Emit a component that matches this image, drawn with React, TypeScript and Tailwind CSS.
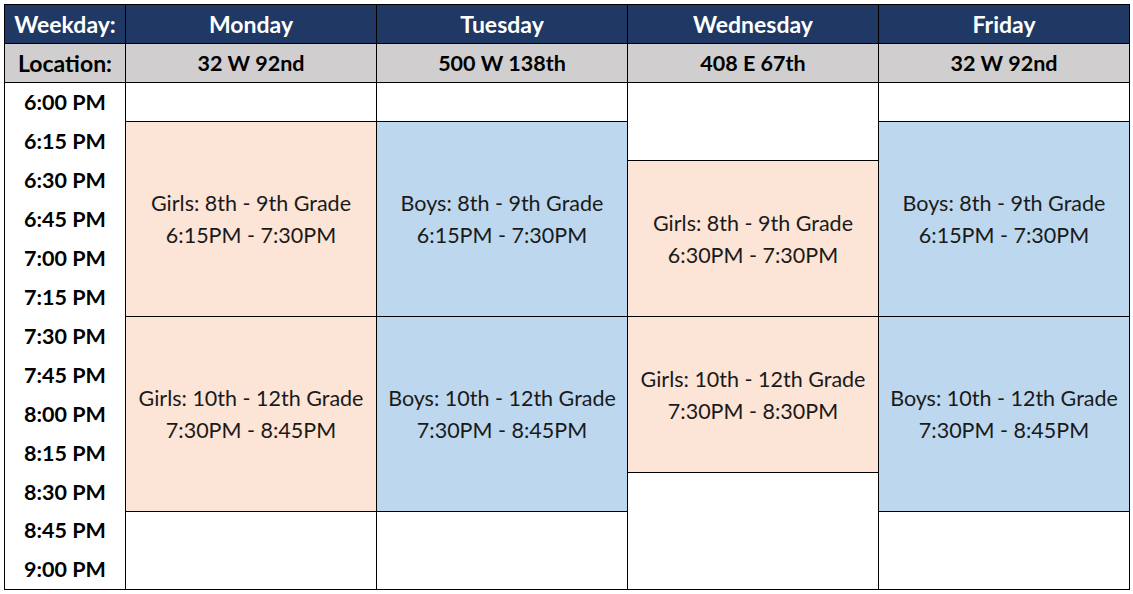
const times = [
  "6:00 PM",
  "6:15 PM",
  "6:30 PM",
  "6:45 PM",
  "7:00 PM",
  "7:15 PM",
  "7:30 PM",
  "7:45 PM",
  "8:00 PM",
  "8:15 PM",
  "8:30 PM",
  "8:45 PM",
  "9:00 PM",
];

const Block = ({
  className,
  lines,
}: {
  className: string;
  lines?: string[];
}) => (
  <div
    className={`flex flex-col items-center justify-center border-r border-b border-black text-[21.5px] leading-[32px] text-[#1a1a1a] ${className}`}
  >
    {lines?.map((line) => (
      <span key={line}>{line}</span>
    ))}
  </div>
);

const App = () => {
  return (
    <div
      className="min-h-[594px] w-[1133px] bg-white pt-[4px] pl-[4px]"
      style={{ fontFamily: "Lato, 'Open Sans', sans-serif" }}
    >
      <div className="grid w-[1126px] grid-cols-[121px_251px_251px_251px_251px] grid-rows-[repeat(15,39px)] border-l border-t border-black">
        {/* weekday row */}
        <div className="flex items-center justify-center border-r border-b border-black bg-[#1f3864] text-[23px] font-bold text-white">
          Weekday:
        </div>
        {["Monday", "Tuesday", "Wednesday", "Friday"].map((day) => (
          <div
            key={day}
            className="flex items-center justify-center border-r border-b border-black bg-[#1f3864] text-[23px] font-bold text-white"
          >
            {day}
          </div>
        ))}

        {/* location row */}
        <div className="flex items-center justify-center border-r border-b border-black bg-[#d0cece] text-[23px] font-bold text-black">
          Location:
        </div>
        {["32 W 92nd", "500 W 138th", "408 E 67th", "32 W 92nd"].map(
          (loc, i) => (
            <div
              key={i}
              className="flex items-center justify-center border-r border-b border-black bg-[#d0cece] text-[21.5px] font-bold text-black"
            >
              {loc}
            </div>
          )
        )}

        {/* time column */}
        <div className="col-start-1 row-start-3 row-span-13 flex flex-col border-r border-b border-black">
          {times.map((t) => (
            <div
              key={t}
              className="flex flex-1 items-center justify-center text-[21.5px] font-bold text-black"
            >
              {t}
            </div>
          ))}
        </div>

        {/* Monday */}
        <Block className="col-start-2 row-start-3 row-span-1" />
        <Block
          className="col-start-2 row-start-4 row-span-5 bg-[#fce4d6]"
          lines={["Girls: 8th - 9th Grade", "6:15PM - 7:30PM"]}
        />
        <Block
          className="col-start-2 row-start-9 row-span-5 bg-[#fce4d6]"
          lines={["Girls: 10th - 12th Grade", "7:30PM - 8:45PM"]}
        />
        <Block className="col-start-2 row-start-14 row-span-2" />

        {/* Tuesday */}
        <Block className="col-start-3 row-start-3 row-span-1" />
        <Block
          className="col-start-3 row-start-4 row-span-5 bg-[#bdd7ee]"
          lines={["Boys: 8th - 9th Grade", "6:15PM - 7:30PM"]}
        />
        <Block
          className="col-start-3 row-start-9 row-span-5 bg-[#bdd7ee]"
          lines={["Boys: 10th - 12th Grade", "7:30PM - 8:45PM"]}
        />
        <Block className="col-start-3 row-start-14 row-span-2" />

        {/* Wednesday */}
        <Block className="col-start-4 row-start-3 row-span-2" />
        <Block
          className="col-start-4 row-start-5 row-span-4 bg-[#fce4d6]"
          lines={["Girls: 8th - 9th Grade", "6:30PM - 7:30PM"]}
        />
        <Block
          className="col-start-4 row-start-9 row-span-4 bg-[#fce4d6]"
          lines={["Girls: 10th - 12th Grade", "7:30PM - 8:30PM"]}
        />
        <Block className="col-start-4 row-start-13 row-span-3" />

        {/* Friday */}
        <Block className="col-start-5 row-start-3 row-span-1" />
        <Block
          className="col-start-5 row-start-4 row-span-5 bg-[#bdd7ee]"
          lines={["Boys: 8th - 9th Grade", "6:15PM - 7:30PM"]}
        />
        <Block
          className="col-start-5 row-start-9 row-span-5 bg-[#bdd7ee]"
          lines={["Boys: 10th - 12th Grade", "7:30PM - 8:45PM"]}
        />
        <Block className="col-start-5 row-start-14 row-span-2" />
      </div>
    </div>
  );
};

export default App;
